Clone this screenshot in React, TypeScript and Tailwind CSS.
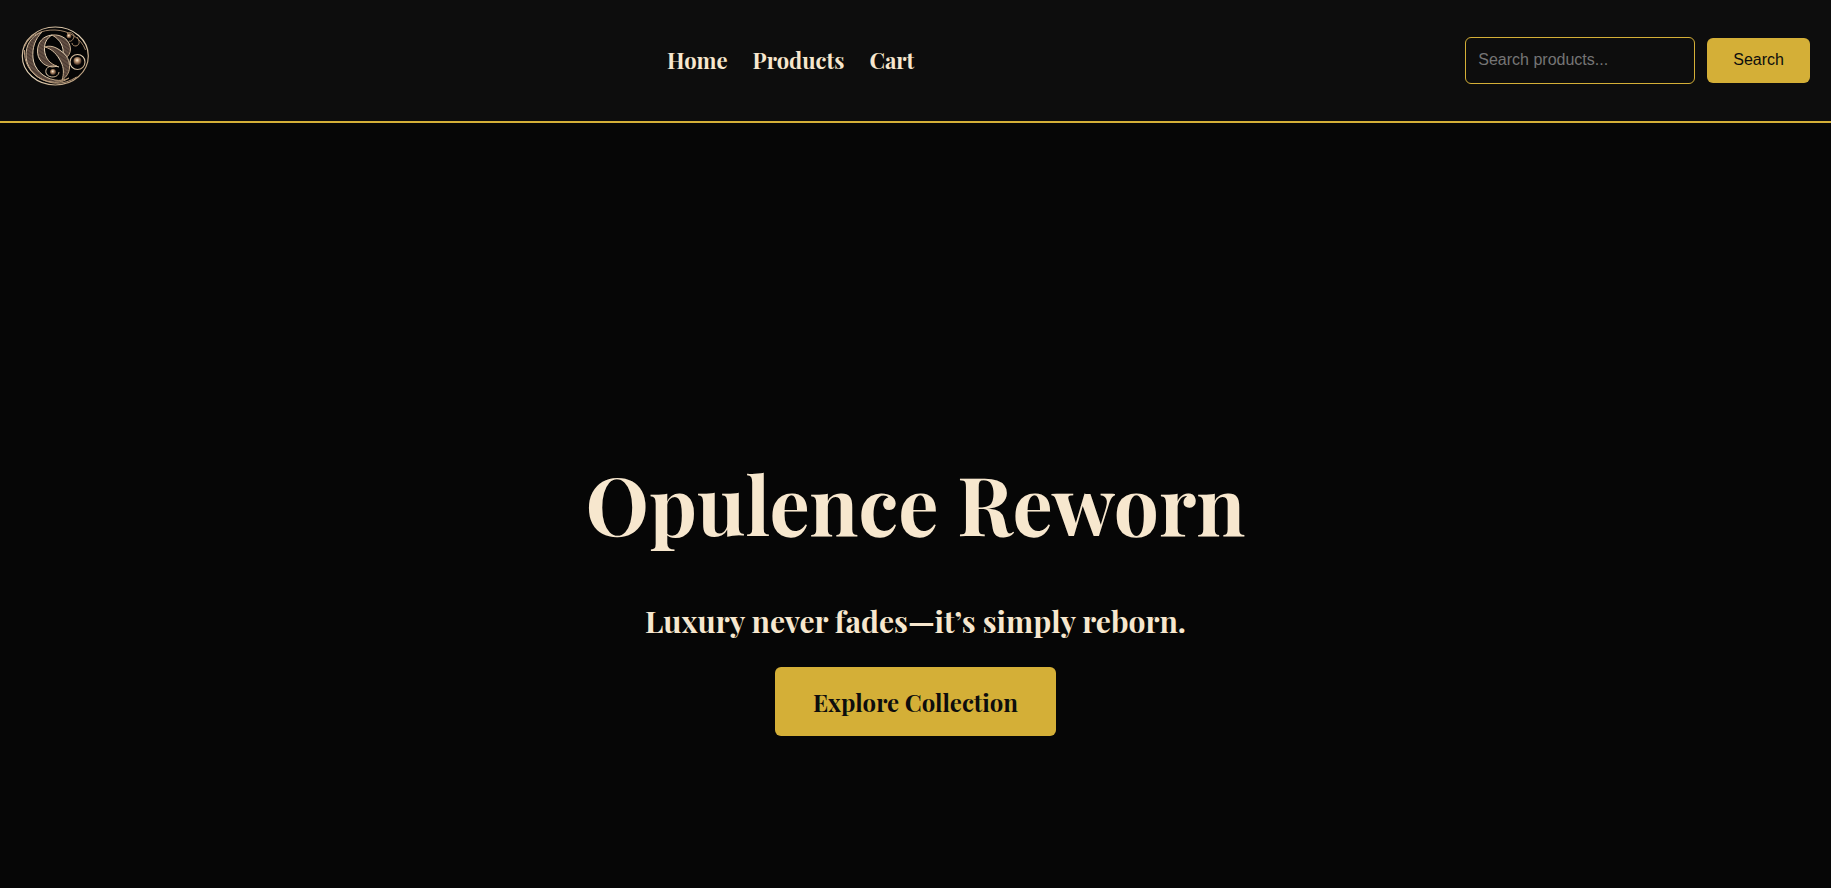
import React from "react";

function Logo() {
  return (
    <svg viewBox="21 24 71 64" className="h-16 w-[71px]" fill="none" role="img" aria-label="Monogram logo">
      <defs>
        <linearGradient id="metal" x1="0" y1="0" x2="1" y2="1">
          <stop offset="0" stopColor="#c4a888" />
          <stop offset="0.5" stopColor="#ead9bd" />
          <stop offset="1" stopColor="#a98a68" />
        </linearGradient>
        <radialGradient id="pearl" cx="0.45" cy="0.4" r="0.65">
          <stop offset="0" stopColor="#fff6e0" />
          <stop offset="0.4" stopColor="#b48c6a" />
          <stop offset="1" stopColor="#24150f" />
        </radialGradient>
        <pattern id="grain" width="3" height="3" patternUnits="userSpaceOnUse" patternTransform="rotate(35)">
          <rect width="3" height="3" fill="#4a3a32" />
          <path d="M0 1h3" stroke="#75604f" strokeWidth="1" />
        </pattern>
      </defs>
      <ellipse cx="55.300" cy="56" rx="33.300" ry="29.500" fill="#050505" />
      <path d="M42 32C31 36 25.500 45 26 57c1 13 12 24 26 25 7 1 13-1 17-4-4 2-9 3-14 2C43 78 34 69 33 58c-1-10 2-19 9-26z" fill="url(#grain)" stroke="url(#metal)" strokeWidth="1" />
      <ellipse cx="55.300" cy="56" rx="33" ry="29" stroke="url(#metal)" strokeWidth="1.200" />
      <path d="M24.500 47C29 35 42 29.500 55 30c14 .5 26 8 30.500 20" stroke="#a08468" strokeWidth="1" />
      <path d="M24.500 50c-1 16 10 30 29 33 9 1 17-2 23-6" stroke="#b8997a" strokeWidth="1" />
      <path d="M52 35c-9 1-14 7-14.500 15-.5 9 5.500 16 14.500 17 2 0 4-.5 5-1-7-2-12-8-12.500-16C44 43 47 38 52 35z" fill="url(#grain)" stroke="url(#metal)" strokeWidth="1" />
      <path d="M52 35c10-1 18 5 18.500 14 0 4-2 7-4.500 9l-3-3c1-8-2-15-11-20z" fill="url(#grain)" stroke="url(#metal)" strokeWidth="1" />
      <path d="M45 47c5-2 11 0 16 4 6 4 9 10 8.500 17-.5 5-3 9-7.500 12 2-6 2-12-1-18-4-8-9-13-16-15z" fill="url(#grain)" stroke="url(#metal)" strokeWidth="1" />
      <path d="M59 67c-6-2-12-1-13 3-1 4 2 7 7 7 3 0 6-2 6-5" stroke="url(#metal)" strokeWidth="1" />
      <path d="M67 34c3-3 7-1 7 3-1 3-3 5-5 4M77 37c3 4 3 8-1 9-2 0-4-1-4-3" stroke="#a98a68" strokeWidth="1" />
      <circle cx="77.500" cy="62" r="7.500" fill="#060505" stroke="url(#metal)" strokeWidth="1.200" />
      <circle cx="77.500" cy="61" r="4" fill="url(#pearl)" />
      <circle cx="69" cy="36" r="2.500" fill="url(#pearl)" />
      <circle cx="53" cy="72" r="3" fill="url(#pearl)" />
    </svg>
  );
}

export default function App() {
  return (
    <div className="flex min-h-screen flex-col bg-[#060606] font-['Playfair_Display','Liberation_Serif',serif] text-[#f7e7ce]">
      <header className="flex items-center justify-between border-b-2 border-[#d4af37] bg-[#0d0d0d] px-[21px] pt-6 pb-[25px]">
        <a href="#home" aria-label="Home page" className="mb-2">
          <Logo />
        </a>
        <nav className="flex gap-[25px] pl-6 text-[22px] leading-8 font-bold">
          <a href="#home">Home</a>
          <a href="#products">Products</a>
          <a href="#cart">Cart</a>
        </nav>
        <form className="flex items-center gap-3 font-['Liberation_Sans',sans-serif] text-base" onSubmit={(e) => e.preventDefault()}>
          <input
            type="search"
            aria-label="Search products"
            placeholder="Search products..."
            className="h-[47px] w-[230px] rounded-md border border-[#d4af37] bg-transparent px-3 placeholder:text-[#757575]"
          />
          <button type="submit" className="h-[45px] rounded-md bg-[#d4af37] px-[26px] text-[#0d0d0d]">
            Search
          </button>
        </form>
      </header>
      <main className="flex flex-1 flex-col items-center justify-end pb-[152px] text-center">
        <h1 className="text-[80px] leading-[108px] font-bold">Opulence Reworn</h1>
        <p className="mt-[42px] text-[30px] leading-[44px] font-bold">Luxury never fades—it’s simply reborn.</p>
        <a href="#products" className="mt-6 flex h-[69px] items-center rounded-md bg-[#d4af37] px-[38px] text-2xl font-bold text-[#0d0d0d]">
          Explore Collection
        </a>
      </main>
    </div>
  );
}
